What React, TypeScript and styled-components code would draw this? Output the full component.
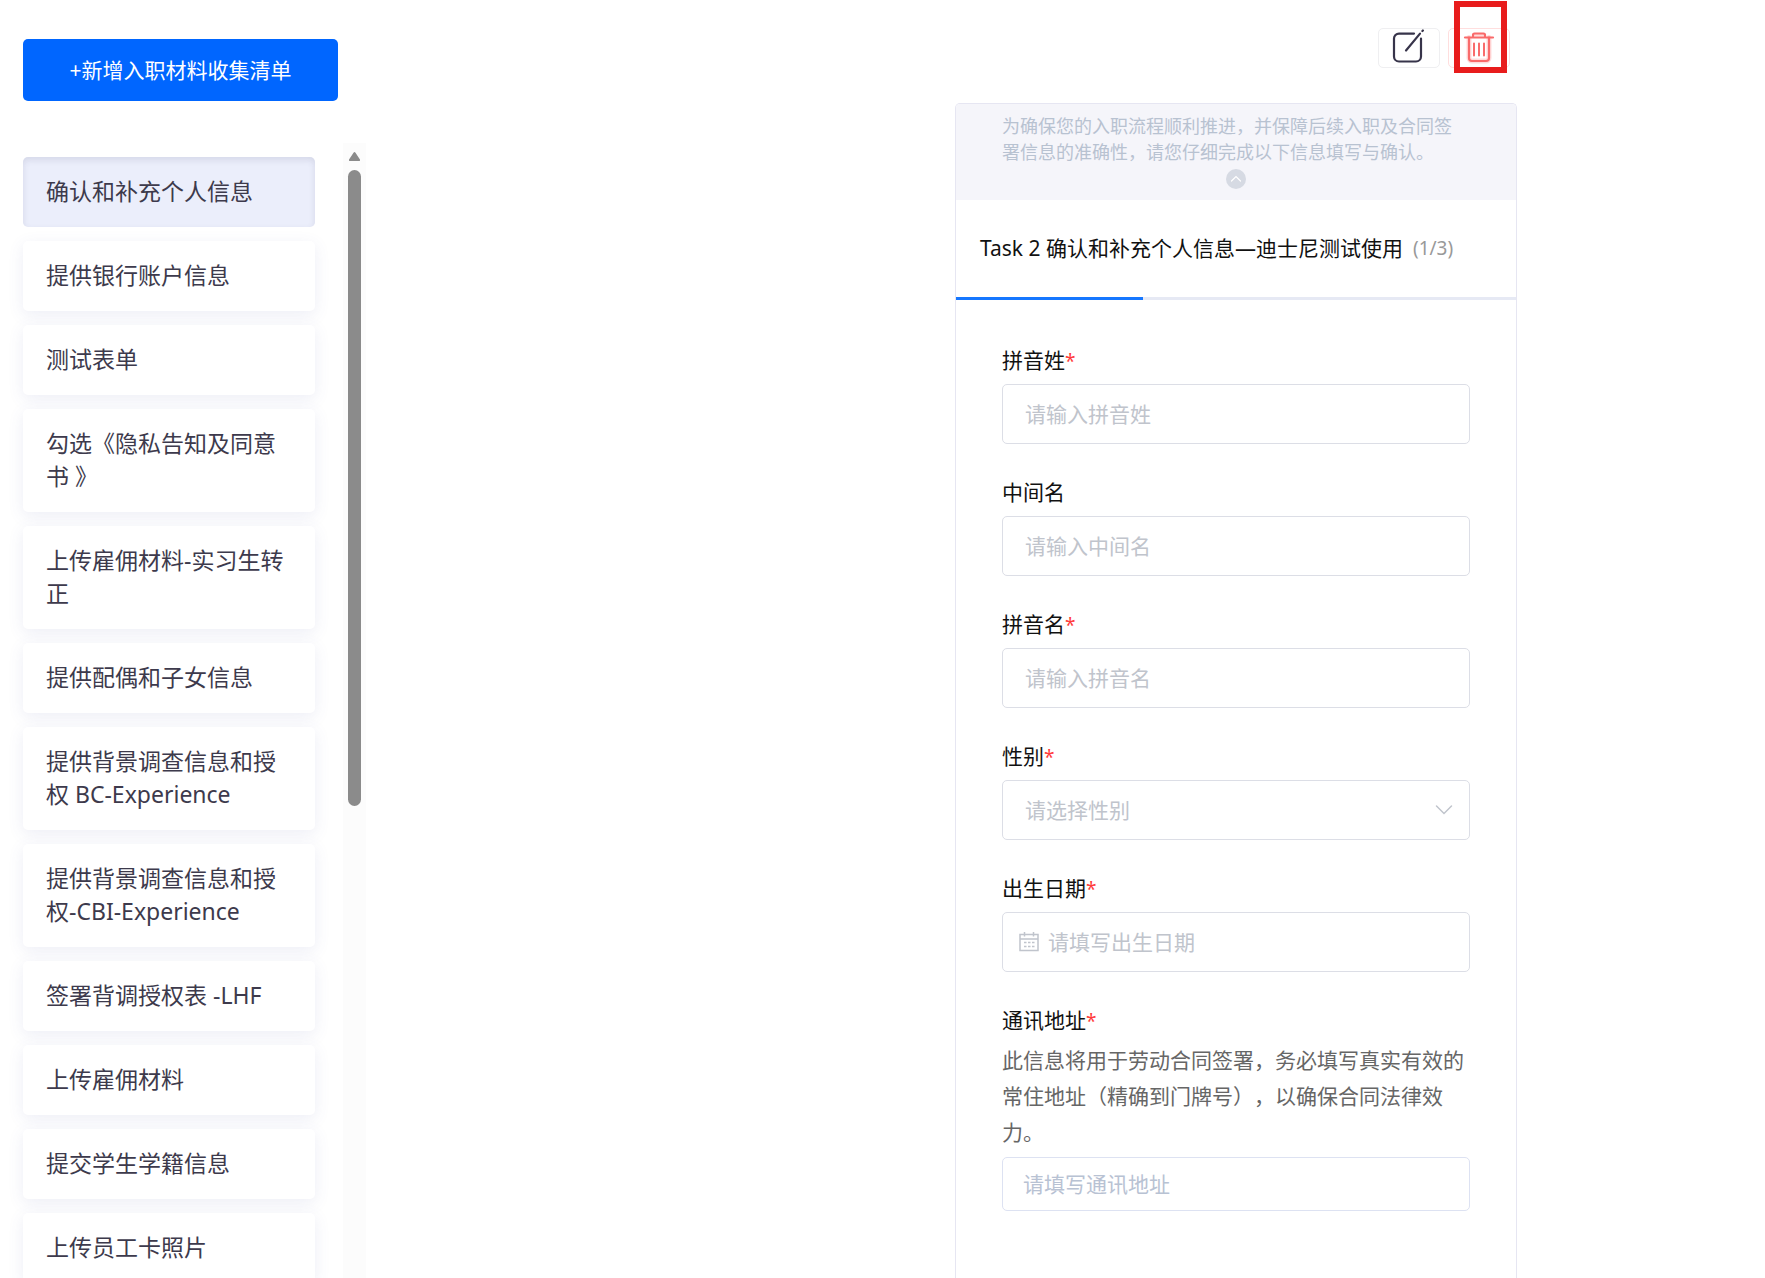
import React, { useState } from 'react';
import styled, { createGlobalStyle } from 'styled-components';

const GlobalStyle = createGlobalStyle`
  *, *::before, *::after { box-sizing: border-box; }
  body { margin: 0; background: #fff; }
  body, button, input, select {
    font-family: "Noto Sans", "Noto Sans CJK SC", sans-serif;
    font-weight: 400;
    text-spacing-trim: space-all;
  }
`;

const Page = styled.div`
  display: flex;
  height: 100vh;
  overflow: hidden;
`;

const Sidebar = styled.aside`
  display: flex;
  flex-direction: column;
  flex: none;
  width: 366px;
`;

const AddButton = styled.button`
  flex: none;
  height: 62px;
  margin: 39px 28px 42px 23px;
  padding: 0;
  border: 0;
  border-radius: 5px;
  background: #0066ff;
  color: #fff;
  font-size: 21px;
  line-height: 30px;
  cursor: pointer;
`;

const ListArea = styled.nav`
  display: flex;
  flex: 1;
  min-height: 0;
`;

const List = styled.ul`
  display: flex;
  flex: 1;
  flex-direction: column;
  gap: 14px;
  margin: 0;
  padding: 14px 28px 14px 23px;
  overflow: hidden;
  list-style: none;
`;

const ListItem = styled.li`
  flex: none;
`;

const ListButton = styled.button<{ $active: boolean }>`
  display: block;
  width: 100%;
  padding: 18px 23px 19px;
  border: 0;
  border-radius: 5px;
  background: ${(p) => (p.$active ? '#ebeefb' : '#fff')};
  box-shadow: ${(p) =>
    p.$active
      ? 'inset 0 3px 6px rgba(60, 60, 100, 0.12)'
      : '0 4px 16px rgba(80, 90, 170, 0.1)'};
  color: #3d3a4c;
  font-size: 23px;
  line-height: 33px;
  text-align: left;
  cursor: pointer;
`;

const ScrollTrack = styled.div`
  display: flex;
  flex: none;
  flex-direction: column;
  align-items: center;
  gap: 9px;
  width: 23px;
  padding-top: 9px;
  background: #fcfcfc;
`;

const ScrollThumb = styled.div`
  width: 13px;
  height: 636px;
  border-radius: 7px;
  background: #8b8b8b;
`;

const Main = styled.main`
  display: flex;
  flex: 1;
  justify-content: flex-end;
  padding-right: 248px;
`;

const Column = styled.div`
  display: flex;
  flex-direction: column;
  width: 562px;
`;

const Toolbar = styled.div`
  display: flex;
  flex: none;
  justify-content: flex-end;
  gap: 8px;
  padding: 28px 7px 35px;
`;

const IconButton = styled.button<{ $danger?: boolean }>`
  display: grid;
  place-items: center;
  width: 62px;
  height: 40px;
  padding: 0;
  border: 1px solid ${(p) => (p.$danger ? '#ffdede' : '#efeff1')};
  border-radius: 5px;
  background: #fff;
  color: ${(p) => (p.$danger ? '#f96b6b' : '#37344a')};
  cursor: pointer;
`;

const Marked = styled.div`
  position: relative;
`;

const MarkFrame = styled.div`
  position: absolute;
  top: -27px;
  left: 6px;
  width: 53px;
  height: 72px;
  border: 6px solid #e81c1c;
  pointer-events: none;
`;

const Card = styled.section`
  flex: 1;
  border: 1px solid #e6e6f2;
  border-bottom: 0;
  border-radius: 5px 5px 0 0;
  overflow: hidden;
`;

const Banner = styled.div`
  display: flex;
  flex-direction: column;
  align-items: center;
  gap: 4px;
  padding: 9px 46px 11px;
  background: #f5f5fa;
`;

const BannerText = styled.p`
  margin: 0;
  padding-right: 4px;
  color: #b8c2d1;
  font-size: 18px;
  line-height: 26px;
`;

const CollapseButton = styled.button`
  display: grid;
  place-items: center;
  width: 20px;
  height: 20px;
  padding: 0;
  border: 0;
  border-radius: 50%;
  background: #d6dae3;
  color: #fff;
  cursor: pointer;
`;

const TitleRow = styled.div`
  display: flex;
  align-items: center;
  gap: 10px;
  height: 97px;
  padding: 0 24px 2px;
`;

const Title = styled.h1`
  margin: 0;
  color: #111;
  font-size: 21px;
  font-weight: 400;
  line-height: 30px;
  white-space: nowrap;
`;

const Step = styled.span`
  color: #999;
  font-size: 19px;
  line-height: 30px;
`;

const ProgressTrack = styled.div`
  height: 3px;
  background: #e6e9f4;
`;

const ProgressFill = styled.div`
  height: 3px;
  background: #1677ff;
`;

const Form = styled.form`
  display: flex;
  flex-direction: column;
  gap: 33px;
  padding: 45px 46px;
`;

const Field = styled.div<{ $dense?: boolean }>`
  display: flex;
  flex-direction: column;
  gap: ${(p) => (p.$dense ? 7 : 9)}px;
`;

const Label = styled.label`
  color: #111;
  font-size: 21px;
  line-height: 30px;
`;

const Required = styled.span`
  color: #ff3b3b;
  font-size: 19px;
  line-height: 20px;
`;

const Hint = styled.p`
  margin: 0;
  color: #666;
  font-size: 21px;
  line-height: 36px;
`;

const Control = styled.div<{ $height?: number; $pad: number; $soft?: boolean }>`
  display: flex;
  align-items: center;
  gap: 9px;
  height: ${(p) => p.$height ?? 60}px;
  padding: 0 16px 0 ${(p) => p.$pad}px;
  border: 1px solid ${(p) => (p.$soft ? '#dde2f2' : '#dcdee6')};
  border-radius: 5px;
  background: #fff;
  color: #c0c4cc;
`;

const TextInput = styled.input<{ $soft?: boolean }>`
  flex: 1;
  min-width: 0;
  height: 100%;
  padding: 0;
  border: 0;
  outline: 0;
  background: transparent;
  color: #111;
  font-size: 21px;
  &::placeholder { color: ${(p) => (p.$soft ? '#b8c2d3' : '#c0c4cc')}; opacity: 1; }
`;

const SelectInput = styled.select`
  flex: 1;
  min-width: 0;
  height: 100%;
  padding: 0;
  border: 0;
  outline: 0;
  appearance: none;
  background: transparent;
  color: #c0c4cc;
  font-size: 21px;
`;

const EditIcon = () => (
  <svg width="34" height="38" viewBox="0 -1 34 38" fill="none" stroke="currentColor" strokeWidth="2.2" strokeLinecap="round">
    <path d="M22 3.600H7a5 5 0 0 0-5 5V26.500a5 5 0 0 0 5 5h17a5 5 0 0 0 5-5V8.500" />
    <path d="M14 20.500 28 3.600" />
    <path d="M30.400 1 30.900.5" />
  </svg>
);

const TrashIcon = () => (
  <svg width="32" height="32" viewBox="0 1 32 32" fill="none" stroke="currentColor" strokeWidth="2.200" strokeLinecap="round" strokeLinejoin="round">
    <path d="M6 6.500V27a3 3 0 0 0 3 3h14a3 3 0 0 0 3-3V6.500" stroke="#fdd" strokeWidth="5" />
    <path d="M10 5.500V4A1.500 1.500 0 0 1 11.500 2.500h9A1.500 1.500 0 0 1 22 4V5.500" fill="#fdd" />
    <path d="M2 6.500h28" />
    <path d="M6 6.500V27a3 3 0 0 0 3 3h14a3 3 0 0 0 3-3V6.500" />
    <path d="M11 12.500v12M16 12.500v12M21 12.500v12" strokeWidth="2" />
  </svg>
);

const ArrowUp = () => (
  <svg width="11" height="9" viewBox="0 0 11 9" fill="#8b8b8b">
    <path d="M4.500.8a1.200 1.200 0 0 1 2 0L10.800 7.300A1 1 0 0 1 10 9H1A1 1 0 0 1 .2 7.300Z" />
  </svg>
);

const ChevronUp = () => (
  <svg width="12" height="8" viewBox="0 0 12 8" fill="none" stroke="currentColor" strokeWidth="1.2" strokeLinecap="round">
    <path d="M1.500 6 6 1.500 10.500 6" />
  </svg>
);

const ChevronDown = () => (
  <svg width="18" height="12" viewBox="0 0 18 12" fill="none" stroke="currentColor" strokeWidth="1.500" strokeLinecap="round">
    <path d="M1.500 2 9 9.500 16.500 2" />
  </svg>
);

const CalendarIcon = () => (
  <svg width="20" height="20" viewBox="0 0 20 20" fill="none" stroke="currentColor" strokeWidth="1.500">
    <path d="M1 2.500h18v16H1zM1 7h18M5.500 0V4.500M14.500 0V4.500" />
    <path d="M5 10.500h2.500M9 10.500h2.500M13 10.500h2.500M5 14.500h2.500M9 14.500h2.500M13 14.500h2.500" />
  </svg>
);

const tasks = [
  '确认和补充个人信息',
  '提供银行账户信息',
  '测试表单',
  '勾选《隐私告知及同意书 》',
  '上传雇佣材料-实习生转正',
  '提供配偶和子女信息',
  '提供背景调查信息和授权 BC-Experience',
  '提供背景调查信息和授权-CBI-Experience',
  '签署背调授权表 -LHF',
  '上传雇佣材料',
  '提交学生学籍信息',
  '上传员工卡照片',
];

const nameFields = [
  { id: 'surname', label: '拼音姓', required: true },
  { id: 'middle', label: '中间名', required: false },
  { id: 'given', label: '拼音名', required: true },
];

export default function App() {
  const [active, setActive] = useState(0);

  return (
    <>
      <GlobalStyle />
      <Page>
        <Sidebar>
          <AddButton type="button">+新增入职材料收集清单</AddButton>
          <ListArea>
            <List>
              {tasks.map((task, i) => (
                <ListItem key={task}>
                  <ListButton type="button" $active={i === active} onClick={() => setActive(i)}>
                    {task}
                  </ListButton>
                </ListItem>
              ))}
            </List>
            <ScrollTrack aria-hidden="true">
              <ArrowUp />
              <ScrollThumb />
            </ScrollTrack>
          </ListArea>
        </Sidebar>
        <Main>
          <Column>
            <Toolbar>
              <IconButton type="button" aria-label="编辑">
                <EditIcon />
              </IconButton>
              <Marked>
                <IconButton type="button" $danger aria-label="删除">
                  <TrashIcon />
                </IconButton>
                <MarkFrame />
              </Marked>
            </Toolbar>
            <Card>
              <Banner>
                <BannerText>
                  为确保您的入职流程顺利推进，并保障后续入职及合同签署信息的准确性，请您仔细完成以下信息填写与确认。
                </BannerText>
                <CollapseButton type="button" aria-label="收起">
                  <ChevronUp />
                </CollapseButton>
              </Banner>
              <TitleRow>
                <Title>Task 2 确认和补充个人信息—迪士尼测试使用</Title>
                <Step>(1/3)</Step>
              </TitleRow>
              <ProgressTrack>
                <ProgressFill style={{ width: `${(1 / 3) * 100}%` }} />
              </ProgressTrack>
              <Form>
                {nameFields.map((f) => (
                  <Field key={f.id}>
                    <Label htmlFor={f.id}>
                      {f.label}
                      {f.required && <Required>*</Required>}
                    </Label>
                    <Control $pad={22}>
                      <TextInput id={f.id} type="text" placeholder={`请输入${f.label}`} />
                    </Control>
                  </Field>
                ))}
                <Field>
                  <Label htmlFor="gender">
                    性别<Required>*</Required>
                  </Label>
                  <Control $pad={22}>
                    <SelectInput id="gender" defaultValue="">
                      <option value="">请选择性别</option>
                    </SelectInput>
                    <ChevronDown />
                  </Control>
                </Field>
                <Field>
                  <Label htmlFor="birth">
                    出生日期<Required>*</Required>
                  </Label>
                  <Control $pad={16}>
                    <CalendarIcon />
                    <TextInput id="birth" type="text" placeholder="请填写出生日期" />
                  </Control>
                </Field>
                <Field $dense>
                  <Label htmlFor="address">
                    通讯地址<Required>*</Required>
                  </Label>
                  <Hint>此信息将用于劳动合同签署，务必填写真实有效的常住地址（精确到门牌号），以确保合同法律效力。</Hint>
                  <Control $height={54} $pad={20} $soft>
                    <TextInput id="address" type="text" placeholder="请填写通讯地址" $soft />
                  </Control>
                </Field>
              </Form>
            </Card>
          </Column>
        </Main>
      </Page>
    </>
  );
}
